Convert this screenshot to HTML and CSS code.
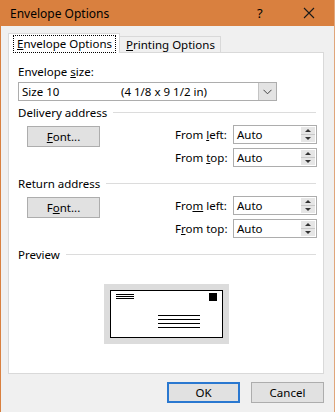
FILE: index.html
```html
<!DOCTYPE html>
<html>
<head>
    <link rel="stylesheet" href="styles.css">
</head>
<body>
    <div class="window">
        <div class="titlebar">
            <span class="title">Envelope Options</span>
            <span class="help">?</span>
            <span class="close">
                <svg width="12" height="12" viewBox="0 0 12 12"><path d="M1 1 L11 11 M11 1 L1 11" stroke="#1a1a1a" stroke-width="1.1"/></svg>
            </span>
        </div>

        <div class="dialog">
            <div class="tabs">
                <div class="tab active"><span class="focus"><u>E</u>nvelope Options</span></div>
                <div class="tab"><u>P</u>rinting Options</div>
            </div>

            <div class="panel">
                <div class="field-label">Envelope <u>s</u>ize:</div>
                <div class="select">
                    <span class="select-name">Size 10</span>
                    <span class="select-dim">(4 1/8 x 9 1/2 in)</span>
                    <span class="select-btn">
                        <svg width="9" height="6" viewBox="0 0 9 6"><path d="M0.5 0.8 L4.5 4.8 L8.5 0.8" fill="none" stroke="#444" stroke-width="1"/></svg>
                    </span>
                </div>

                <div class="group-head"><span>Delivery address</span></div>
                <div class="address">
                    <button class="btn font-btn"><u>F</u>ont...</button>
                    <div class="fields">
                        <div class="field-row">
                            <span class="lbl">From <u>l</u>eft:</span>
                            <div class="spin"><span>Auto</span><span class="spin-btn"><i class="up"></i><i class="down"></i></span></div>
                        </div>
                        <div class="field-row">
                            <span class="lbl">From <u>t</u>op:</span>
                            <div class="spin"><span>Auto</span><span class="spin-btn"><i class="up"></i><i class="down"></i></span></div>
                        </div>
                    </div>
                </div>

                <div class="group-head"><span>Return address</span></div>
                <div class="address">
                    <button class="btn font-btn">F<u>o</u>nt...</button>
                    <div class="fields">
                        <div class="field-row">
                            <span class="lbl">Fro<u>m</u> left:</span>
                            <div class="spin"><span>Auto</span><span class="spin-btn"><i class="up"></i><i class="down"></i></span></div>
                        </div>
                        <div class="field-row">
                            <span class="lbl">F<u>r</u>om top:</span>
                            <div class="spin"><span>Auto</span><span class="spin-btn"><i class="up"></i><i class="down"></i></span></div>
                        </div>
                    </div>
                </div>

                <div class="group-head"><span>Preview</span></div>
                <div class="preview">
                    <div class="envelope">
                        <div class="env-top">
                            <div class="return-lines"><i></i><i></i><i></i></div>
                            <div class="stamp"></div>
                        </div>
                        <div class="addr-lines"><i></i><i></i><i></i><i></i></div>
                    </div>
                </div>
            </div>

            <div class="footer">
                <button class="btn ok">OK</button>
                <button class="btn cancel">Cancel</button>
            </div>
        </div>
    </div>
</body>
</html>
```

FILE: styles.css
```css
body {
    margin: 0;
    font-family: 'Noto Sans', sans-serif;
    font-size: 11.5px;
    color: #000;
}

.window {
    width: 335px;
    height: 412px;
    box-sizing: border-box;
    border-left: 1px solid #d9803f;
    border-right: 1px solid #e0a57a;
    background-color: #f0f0f0;
    overflow: hidden;
}

.titlebar {
    height: 26px;
    background-color: #d9803f;
    display: flex;
    align-items: center;
    padding-left: 9px;
    font-size: 12px;
}

.title {
    flex: 1;
}

.help {
    width: 12px;
    margin-right: 34px;
    font-size: 13px;
}

.close {
    display: flex;
    margin-right: 19px;
}

.dialog {
    padding: 7px 10px 0 7px;
}

.tabs {
    display: flex;
    align-items: flex-end;
    height: 19px;
}

.tab {
    height: 15px;
    line-height: 15px;
    padding: 0 5px 0 6px;
    border: 1px solid #d9d9d9;
    border-bottom: none;
    border-left: none;
    background-color: #f0f0f0;
}

.tab.active {
    height: 19px;
    line-height: 19px;
    padding: 0 3px 0 4px;
    border-left: 1px solid #d9d9d9;
    background-color: #fff;
    position: relative;
    top: 1px;
}

.tab .focus {
    border: 1px dotted #000;
    padding: 0 3px 1px 3px;
    line-height: 15px;
}

.panel {
    height: 322px;
    box-sizing: border-box;
    background-color: #fff;
    border: 1px solid #d9d9d9;
    padding: 12px 6px 0 9px;
}

.field-label {
    height: 17px;
    line-height: 14px;
}

.select {
    width: 259px;
    height: 19px;
    box-sizing: border-box;
    border: 1px solid #adadad;
    display: flex;
    align-items: center;
    padding-left: 3px;
}

.select-name {
    width: 99px;
}

.select-dim {
    flex: 1;
}

.select-btn {
    width: 17px;
    height: 17px;
    background-color: #e3e3e3;
    border-left: 1px solid #c4c4c4;
    display: flex;
    align-items: center;
    justify-content: center;
}

.group-head {
    display: flex;
    align-items: center;
    height: 16px;
    margin-top: 3px;
}

.address + .group-head {
    margin-top: 8px;
}

.group-head::after {
    content: '';
    flex: 1;
    margin-left: 6px;
    margin-right: 1px;
    border-top: 1px solid #dcdcdc;
}

.address {
    display: flex;
    margin-top: 5px;
}

.btn {
    font-family: 'Noto Sans', sans-serif;
    font-size: 11.5px;
    color: #000;
    background-color: #e1e1e1;
    border: 1px solid #adadad;
    padding: 0;
}

.font-btn {
    width: 73px;
    height: 21px;
    margin-left: 9px;
    margin-top: 1px;
}

.fields {
    margin-left: auto;
    display: flex;
    flex-direction: column;
    gap: 4px;
}

.field-row {
    display: flex;
    align-items: center;
}

.lbl {
    width: 58px;
}

.spin {
    width: 84px;
    height: 19px;
    box-sizing: border-box;
    border: 1px solid #adadad;
    display: flex;
    align-items: center;
    padding-left: 3px;
}

.spin span:first-child {
    flex: 1;
}

.spin-btn {
    width: 14px;
    height: 15px;
    margin-right: 1px;
    display: flex;
    flex-direction: column;
    background-color: #e6e6e6;
}

.spin-btn i {
    flex: 1;
    display: flex;
    align-items: center;
    justify-content: center;
}

.spin-btn i::before {
    content: '';
    border-left: 3px solid transparent;
    border-right: 3px solid transparent;
}

.spin-btn .up::before {
    border-bottom: 3px solid #333;
}

.spin-btn .down::before {
    border-top: 3px solid #333;
}

.spin-btn .up {
    border-bottom: 1px solid #c8c8c8;
}

.preview {
    display: flex;
    justify-content: center;
    margin-top: 22px;
    padding-right: 2px;
}

.envelope {
    width: 125px;
    height: 60px;
    box-sizing: border-box;
    background-color: #fff;
    border: 6px solid #dcdcdc;
    outline: 1px solid #000;
    outline-offset: -7px;
    padding: 3px 6px 0 6px;
}

.env-top {
    display: flex;
    justify-content: space-between;
}

.return-lines {
    display: flex;
    flex-direction: column;
    gap: 1px;
    margin-top: 1px;
}

.return-lines i {
    display: block;
    width: 18px;
    height: 1px;
    background-color: #000;
}

.stamp {
    width: 8px;
    height: 8px;
    background-color: #000;
}

.addr-lines {
    display: flex;
    flex-direction: column;
    gap: 3px;
    margin-left: 42px;
    margin-top: 14px;
}

.addr-lines i {
    display: block;
    width: 42px;
    height: 1px;
    background-color: #000;
}

.footer {
    display: flex;
    justify-content: flex-end;
    gap: 11px;
    margin-top: 8px;
}

.footer .btn {
    width: 73px;
    height: 21px;
}

.footer .ok {
    border: 2px solid #2a78d0;
}
```
